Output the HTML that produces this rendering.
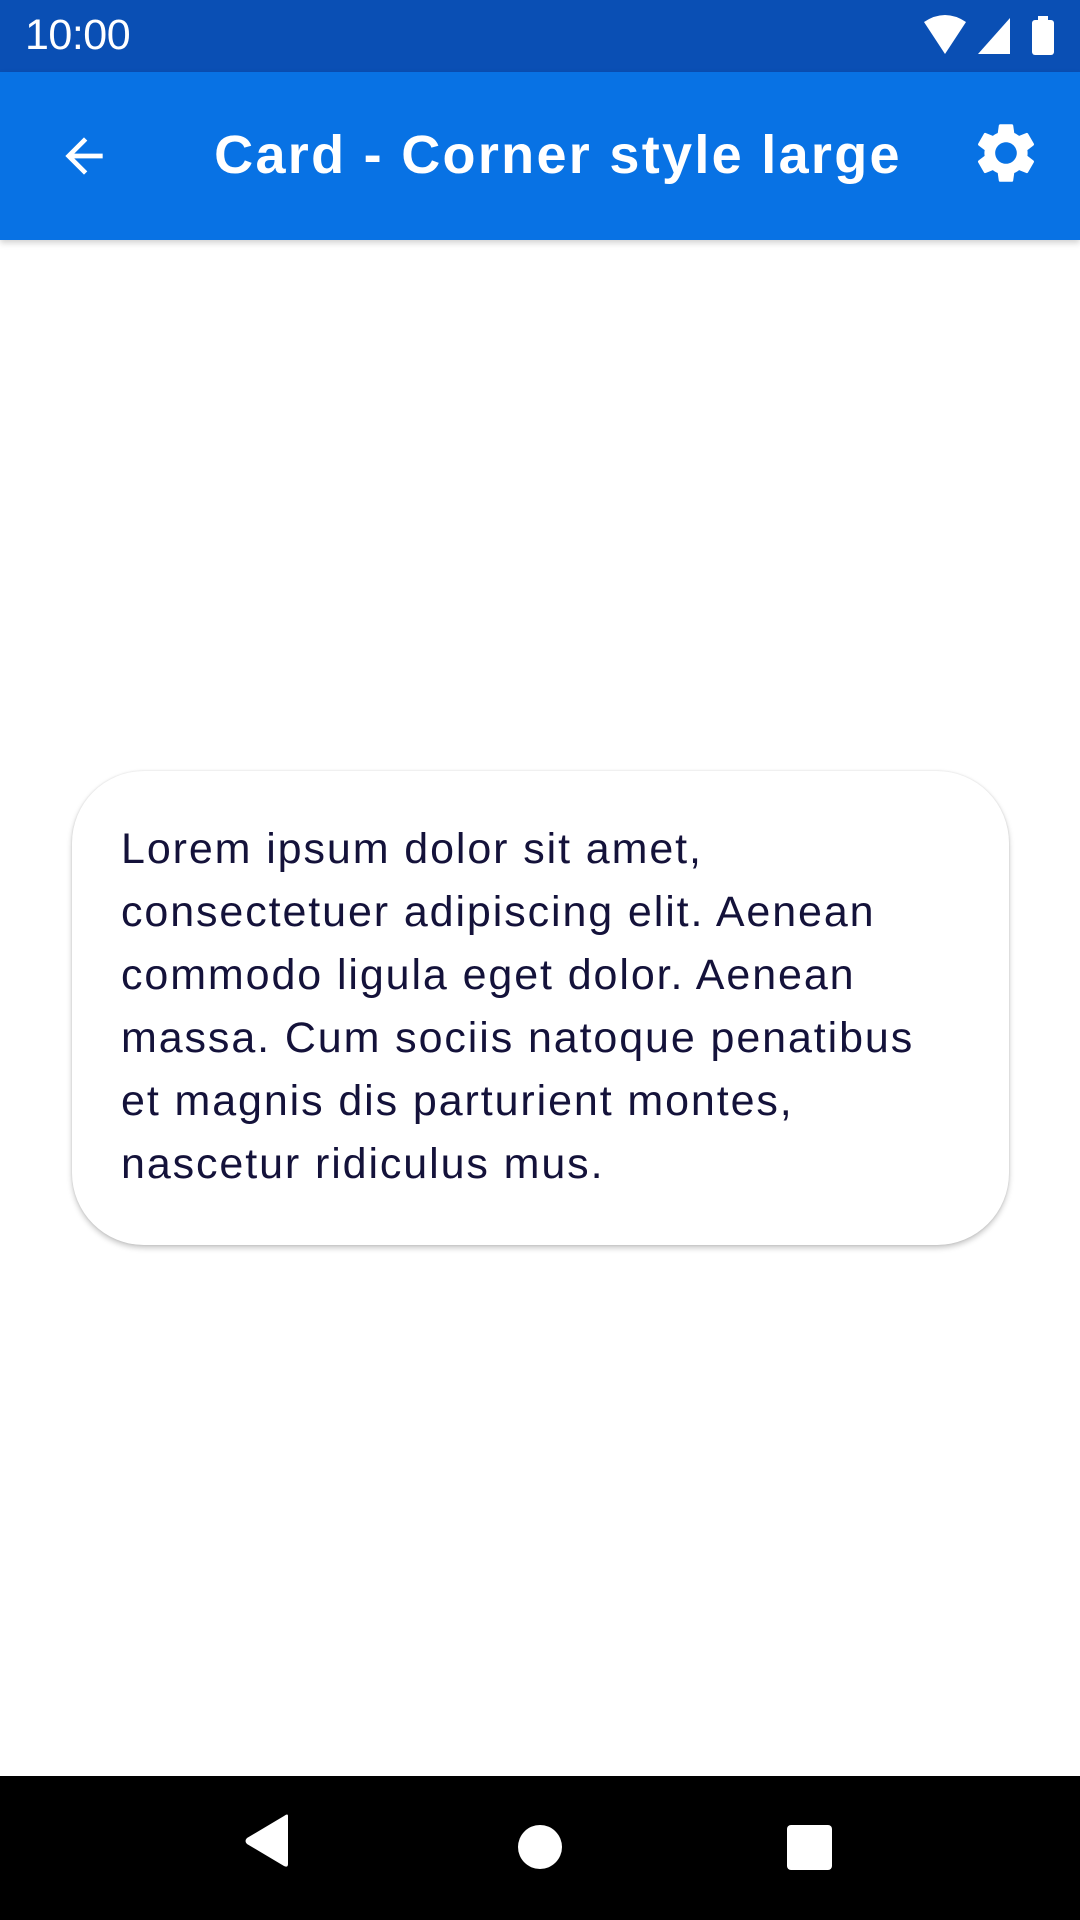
<!DOCTYPE html>
<html><head><meta charset="utf-8"><style>
*{margin:0;padding:0;box-sizing:border-box}
body{width:1080px;height:1920px;background:#fff;position:relative;overflow:hidden;font-family:"Liberation Sans",sans-serif}
.sb{position:absolute;left:0;top:0;width:1080px;height:72px;background:#0a4fb4}
.time{position:absolute;left:25px;top:11px;color:#fff;font-size:43px;letter-spacing:-0.5px}
.ab{position:absolute;left:0;top:72px;width:1080px;height:168px;background:#0872e4;box-shadow:0 3px 6px rgba(0,0,0,.18)}
.title{position:absolute;left:0;width:1080px;top:52px;text-align:center;color:#fff;font-weight:bold;font-size:54px;letter-spacing:2.3px;padding-left:36px}
.card{position:absolute;left:72px;top:771px;width:937px;height:474px;border-radius:72px;background:#fff;box-shadow:0 3px 6px rgba(0,0,0,.22),0 0 2px rgba(0,0,0,.12)}
.txt{position:absolute;left:49px;top:47px;color:#14123a;font-size:43px;line-height:63px;white-space:nowrap;letter-spacing:1.9px}
.nav{position:absolute;left:0;top:1776px;width:1080px;height:144px;background:#000}
</style></head><body>
<div class="sb"><div class="time">10:00</div>
<svg style="position:absolute;left:920px;top:14px" width="150" height="42" viewBox="0 0 150 42">
<path d="M4 8 Q25 -6 46 8 L25 40 Z" fill="#fff"/>
<path d="M58 40 L90 4 L90 40 Z" fill="#fff"/>
<rect x="112" y="6" width="22" height="35" rx="3" fill="#fff"/><rect x="118" y="2" width="10" height="6" fill="#fff"/>
</svg></div>
<div class="ab">
<svg style="position:absolute;left:56px;top:56px" width="56" height="56" viewBox="0 0 24 24"><path d="M20 11H7.83l5.59-5.59L12 4l-8 8 8 8 1.41-1.41L7.83 13H20v-2z" fill="#fff"/></svg>
<div class="title">Card - Corner style large</div>
<svg style="position:absolute;left:970px;top:45px" width="72" height="72" viewBox="0 0 24 24"><path fill="#fff" d="M19.14 12.94c.04-.3.06-.61.06-.94 0-.32-.02-.64-.07-.94l2.03-1.58a.49.49 0 0 0 .12-.61l-1.92-3.32a.488.488 0 0 0-.59-.22l-2.39.96c-.5-.38-1.03-.7-1.62-.94l-.36-2.54a.484.484 0 0 0-.48-.41h-3.84c-.24 0-.43.17-.47.41l-.36 2.54c-.59.24-1.13.57-1.62.94l-2.39-.96c-.22-.08-.47 0-.59.22L2.74 8.87c-.12.21-.08.47.12.61l2.03 1.58c-.05.3-.09.63-.09.94s.02.64.07.94l-2.03 1.58a.49.49 0 0 0-.12.61l1.92 3.32c.12.22.37.29.59.22l2.39-.96c.5.38 1.03.7 1.62.94l.36 2.54c.05.24.24.41.48.41h3.84c.24 0 .44-.17.47-.41l.36-2.54c.59-.24 1.13-.56 1.62-.94l2.39.96c.22.08.47 0 .59-.22l1.92-3.32c.12-.22.07-.47-.12-.61l-2.01-1.58zM12 15.6c-1.98 0-3.6-1.62-3.6-3.6s1.62-3.6 3.6-3.6 3.6 1.62 3.6 3.6-1.62 3.6-3.6 3.6z"/></svg>
</div>
<div class="card"><div class="txt">Lorem ipsum dolor sit amet,<br>consectetuer adipiscing elit. Aenean<br>commodo ligula eget dolor. Aenean<br>massa. Cum sociis natoque penatibus<br>et magnis dis parturient montes,<br>nascetur ridiculus mus.</div></div>
<div class="nav">
<svg style="position:absolute;left:0;top:0" width="1080" height="144" viewBox="0 0 1080 144">
<path d="M288 40 L288 88 Q288 92 284 90 L247 68 Q244 65 247 62 L284 40 Q288 37 288 40Z" fill="#fff"/>
<circle cx="540" cy="71" r="22" fill="#fff"/>
<rect x="787" y="49" width="45" height="45" rx="4" fill="#fff"/>
</svg></div>
</body></html>
